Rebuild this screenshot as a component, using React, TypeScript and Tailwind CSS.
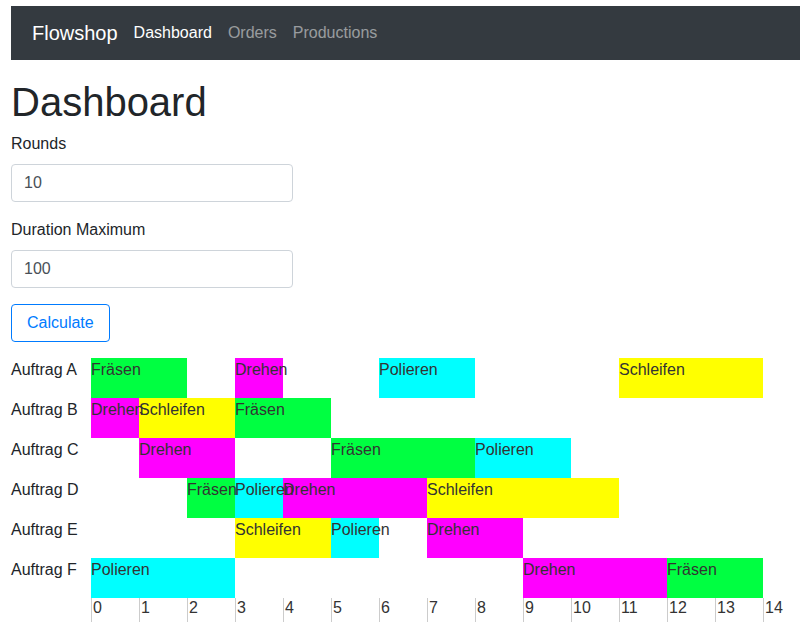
import React from 'react';

type Step = { name: string; start: number; end: number };

const COLORS: Record<string, string> = {
  'Fräsen': '#00ff41',
  Drehen: '#ff00ff',
  Polieren: '#00ffff',
  Schleifen: '#ffff00',
};

const jobs: { label: string; steps: Step[] }[] = [
  {
    label: 'Auftrag A',
    steps: [
      { name: 'Fräsen', start: 0, end: 2 },
      { name: 'Drehen', start: 3, end: 4 },
      { name: 'Polieren', start: 6, end: 8 },
      { name: 'Schleifen', start: 11, end: 14 },
    ],
  },
  {
    label: 'Auftrag B',
    steps: [
      { name: 'Drehen', start: 0, end: 1 },
      { name: 'Schleifen', start: 1, end: 3 },
      { name: 'Fräsen', start: 3, end: 5 },
    ],
  },
  {
    label: 'Auftrag C',
    steps: [
      { name: 'Drehen', start: 1, end: 3 },
      { name: 'Fräsen', start: 5, end: 8 },
      { name: 'Polieren', start: 8, end: 10 },
    ],
  },
  {
    label: 'Auftrag D',
    steps: [
      { name: 'Fräsen', start: 2, end: 3 },
      { name: 'Polieren', start: 3, end: 4 },
      { name: 'Drehen', start: 4, end: 7 },
      { name: 'Schleifen', start: 7, end: 11 },
    ],
  },
  {
    label: 'Auftrag E',
    steps: [
      { name: 'Schleifen', start: 3, end: 5 },
      { name: 'Polieren', start: 5, end: 6 },
      { name: 'Drehen', start: 7, end: 9 },
    ],
  },
  {
    label: 'Auftrag F',
    steps: [
      { name: 'Polieren', start: 0, end: 3 },
      { name: 'Drehen', start: 9, end: 12 },
      { name: 'Fräsen', start: 12, end: 14 },
    ],
  },
];

const ticks = Array.from({ length: 15 }, (_, i) => i);

function Field({ label, value }: { label: string; value: string }) {
  return (
    <div className="mb-4">
      <label className="block mb-2 leading-6">{label}</label>
      <input
        defaultValue={value}
        className="block w-[282px] h-[38px] px-3 border border-[#ced4da] rounded text-[#495057] leading-6 outline-none"
      />
    </div>
  );
}

function Gantt() {
  return (
    <div className="grid grid-cols-[80px_repeat(14,48px)] auto-rows-[40px]">
      {jobs.map((job, r) => (
        <React.Fragment key={job.label}>
          <div className="leading-6" style={{ gridRow: r + 1, gridColumn: 1 }}>
            {job.label}
          </div>
          {job.steps.map((s) => (
            <div
              key={s.name + s.start}
              className="leading-6 text-[#333] whitespace-nowrap"
              style={{
                gridRow: r + 1,
                gridColumn: `${s.start + 2} / ${s.end + 2}`,
                backgroundColor: COLORS[s.name],
              }}
            >
              <span className="relative z-10">{s.name}</span>
            </div>
          ))}
        </React.Fragment>
      ))}
      <div className="col-start-2 col-span-14 flex h-6">
        {ticks.map((t) => (
          <div
            key={t}
            className={`${t < 14 ? 'w-12 shrink-0' : ''} border-l border-[#ccc] pl-px leading-5 text-[#333]`}
          >
            {t}
          </div>
        ))}
      </div>
    </div>
  );
}

export default function App() {
  return (
    <div className="pl-[11px] pt-[6px] text-[#212529] text-base font-['Liberation_Sans',Arial,sans-serif]">
      <nav className="flex items-center h-[54px] bg-[#343a40] pl-[21px]">
        <span className="text-white text-xl mr-4">Flowshop</span>
        <a className="text-white px-0 mr-4">Dashboard</a>
        <a className="text-white/50 mr-4">Orders</a>
        <a className="text-white/50">Productions</a>
      </nav>
      <h1 className="mt-[18px] mb-[6px] text-[40px] leading-[48px]">Dashboard</h1>
      <Field label="Rounds" value="10" />
      <Field label="Duration Maximum" value="100" />
      <button className="h-[38px] px-[15px] border border-[#007bff] rounded text-[#007bff] leading-6 mb-4">
        Calculate
      </button>
      <Gantt />
    </div>
  );
}
